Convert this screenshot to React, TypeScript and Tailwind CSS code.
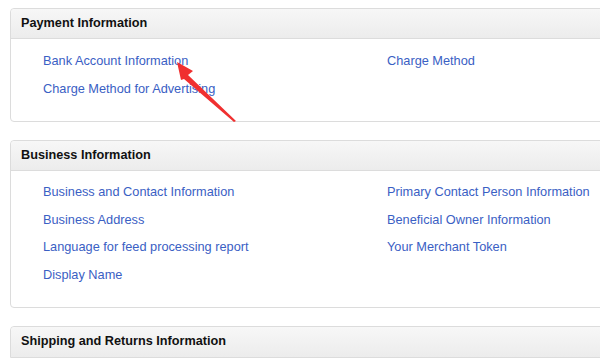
import React from 'react';

interface Section {
  title: string;
  left: string[];
  right: string[];
  bodyClass: string;
}

const sections: Section[] = [
  {
    title: 'Payment Information',
    left: ['Bank Account Information', 'Charge Method for Advertising'],
    right: ['Charge Method'],
    bodyClass: 'pt-[8px] pb-[19px]',
  },
  {
    title: 'Business Information',
    left: [
      'Business and Contact Information',
      'Business Address',
      'Language for feed processing report',
      'Display Name',
    ],
    right: ['Primary Contact Person Information', 'Beneficial Owner Information', 'Your Merchant Token'],
    bodyClass: 'pt-[7px] pb-[19px]',
  },
];

function Panel({ section }: { section: Section }) {
  return (
    <div className="w-[620px] rounded-[4px] border border-[#dcdcdc] bg-white">
      <div className="flex h-[30px] items-center rounded-t-[4px] border-b border-[#dcdcdc] bg-gradient-to-b from-[#f7f7f7] to-[#ececec] pl-[10px] text-[12.7px] font-bold text-[#111]">
        {section.title}
      </div>
      <div className={`grid grid-cols-[344px_1fr] pl-[32px] ${section.bodyClass}`}>
        <div className="flex flex-col">
          {section.left.map((l) => (
            <a key={l} className="flex h-[27.5px] items-center text-[12.75px] text-[#3a60c4]">
              {l}
            </a>
          ))}
        </div>
        <div className="flex flex-col">
          {section.right.map((l) => (
            <a key={l} className="flex h-[27.5px] items-center text-[12.75px] text-[#3a60c4]">
              {l}
            </a>
          ))}
        </div>
      </div>
    </div>
  );
}

export default function App() {
  return (
    <div
      className="relative h-[359px] w-[600px] overflow-hidden bg-white pl-[10px] pt-[8px]"
      style={{ fontFamily: '"Liberation Sans", Arial, sans-serif' }}
    >
      <div className="flex flex-col gap-[18px]">
        {sections.map((s) => (
          <Panel key={s.title} section={s} />
        ))}
        <div className="w-[620px] rounded-t-[4px] border border-[#dcdcdc]">
          <div className="flex h-[30px] items-center rounded-t-[4px] bg-gradient-to-b from-[#f7f7f7] to-[#ececec] pl-[10px] text-[12.7px] font-bold text-[#111]">
            Shipping and Returns Information
          </div>
        </div>
      </div>
      {/* red annotation arrow */}
      <svg className="absolute left-0 top-0" width="600" height="359" viewBox="0 0 600 359">
        <polygon points="177,62 193,71 188,75 236,121 234,122 184,79 181,80" fill="#f03030" />
      </svg>
    </div>
  );
}
